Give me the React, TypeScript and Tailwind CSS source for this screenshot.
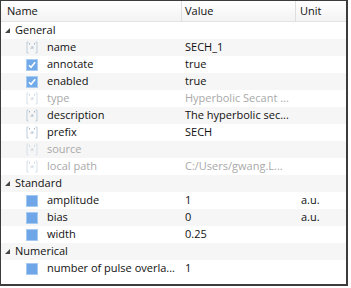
import React from "react";

type Kind = "text" | "check" | "num";

type Row =
  | { group: string }
  | { name: string; value?: string; unit?: string; kind: Kind; off?: boolean };

const rows: Row[] = [
  { group: "General" },
  { name: "name", value: "SECH_1", kind: "text" },
  { name: "annotate", value: "true", kind: "check" },
  { name: "enabled", value: "true", kind: "check" },
  { name: "type", value: "Hyperbolic Secant ...", kind: "text", off: true },
  { name: "description", value: "The hyperbolic sec...", kind: "text" },
  { name: "prefix", value: "SECH", kind: "text" },
  { name: "source", kind: "text", off: true },
  { name: "local path", value: "C:/Users/gwang.L...", kind: "text", off: true },
  { group: "Standard" },
  { name: "amplitude", value: "1", unit: "a.u.", kind: "num" },
  { name: "bias", value: "0", unit: "a.u.", kind: "num" },
  { name: "width", value: "0.25", kind: "num" },
  { group: "Numerical" },
  { name: "number of pulse overla...", value: "1", kind: "num" },
];

function Icon({ kind, off }: { kind: Kind; off?: boolean }) {
  if (kind === "check")
    return (
      <svg width="12" height="12" viewBox="0 0 12 12">
        <rect x="0.5" y="0.5" width="11" height="11" fill="#72aae9" stroke="#a9ccf3" />
        <path d="M3 6.2 L5 8.3 L9.2 3.3" fill="none" stroke="#fff" strokeWidth="1.6" />
      </svg>
    );
  if (kind === "num")
    return (
      <svg width="12" height="12" viewBox="0 0 12 12">
        <rect x="0.5" y="0.5" width="11" height="11" fill="#6ea6e8" stroke="#a6c9f2" />
      </svg>
    );
  const c = off ? "#d6e0ea" : "#bccbdb";
  const t = off ? "#c3cfdb" : "#9fb2c6";
  return (
    <svg width="12" height="13" viewBox="0 0 12 13">
      <path d="M2.5 1 H1 V12 H2.5 M9.5 1 H11 V12 H9.5" fill="none" stroke={c} />
      <path d="M3.5 2 V3.5 M8.5 2 V3.5" stroke={t} />
      <text x="6" y="8" fontSize="6" textAnchor="middle" fill={t} fontFamily="Open Sans, sans-serif">
        a
      </text>
    </svg>
  );
}

export default function App() {
  return (
    <div className="w-[351px] h-[288px] bg-white font-['Open_Sans',sans-serif] text-[11px] text-[#111]">
      <div className="w-[348px] h-[286px] border-l border-t border-r-2 border-b-2 border-[#3c3c3c] overflow-hidden">
        <div className="flex h-[21px] items-center border-b border-[#e3e3e3] bg-gradient-to-b from-white to-[#f3f3f3]">
          <div className="w-[181px] h-full flex items-center pl-[6px] border-r border-[#dedede]">Name</div>
          <div className="w-[114px] h-full flex items-center pl-[3px] border-r border-[#dedede]">Value</div>
          <div className="flex-1 pl-[4px]">Unit</div>
        </div>
        {rows.map((r, i) => (
          <div key={i} className={`flex h-[17px] items-center ${i % 2 ? "bg-[#f6f6f6]" : "bg-white"}`}>
            {"group" in r ? (
              <div className="flex items-center pl-[3px]">
                <svg width="7" height="7" viewBox="0 0 7 7" className="mr-[4px]">
                  <polygon points="6,1 6,6 1,6" fill="#444" />
                </svg>
                <span>{r.group}</span>
              </div>
            ) : (
              <>
                <div className="w-[181px] flex items-center pl-[25px] shrink-0">
                  <Icon kind={r.kind} off={r.off} />
                  <span className={`ml-[9px] whitespace-nowrap ${r.off ? "text-[#a9a9a9]" : ""}`}>{r.name}</span>
                </div>
                <div className={`w-[115px] pl-[3px] whitespace-nowrap shrink-0 ${r.off ? "text-[#a9a9a9]" : ""}`}>
                  {r.value}
                </div>
                <div className="flex-1 pl-[4px]">{r.unit}</div>
              </>
            )}
          </div>
        ))}
      </div>
    </div>
  );
}
